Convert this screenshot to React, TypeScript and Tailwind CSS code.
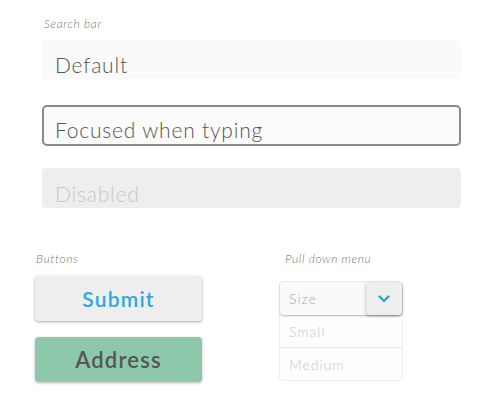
import React from 'react';

const font = { fontFamily: 'Lato, "Noto Sans", sans-serif' };

const Label = ({ children }: { children: React.ReactNode }) => (
  <p className="text-[12px] italic font-light text-[#777] tracking-[0.6px] leading-none">{children}</p>
);

const App = () => {
  return (
    <div className="w-[500px] h-[404px] bg-white relative" style={font}>
      {/* Search bar */}
      <div className="pt-[18px] pl-[42px] pr-[39px]">
        <div className="pl-[2px]">
          <Label>Search bar</Label>
        </div>
        <div className="mt-[10px] h-[39px] rounded-[4px] bg-[#fafafa] flex items-start pt-[14px] px-[13px] text-[21px] leading-none font-light text-[#555] tracking-[0.8px]">
          Default
        </div>
        <div className="mt-[26px] h-[41px] rounded-[5px] border-2 border-[#8a8a8a] bg-[#fbfbfb] flex items-start pt-[12px] px-[11px] text-[21px] leading-none font-light text-[#555] tracking-[0.8px]">
          Focused when typing
        </div>
        <div className="mt-[22px] h-[40px] rounded-[4px] bg-[#eeeeee] flex items-start pt-[15px] px-[13px] text-[21px] leading-none font-light text-[#c8c8c8] tracking-[0.8px]">
          Disabled
        </div>
      </div>

      <div className="flex mt-[45px]">
        {/* Buttons */}
        <div className="pl-[35px] w-[250px]">
          <div className="pl-[1px]">
            <Label>Buttons</Label>
          </div>
          <div className="mt-[11px] w-[167px] h-[45px] rounded-[4px] bg-[#eeeeee] shadow-[0_1px_3px_rgba(0,0,0,0.35)] flex items-center justify-center text-[21px] font-semibold text-[#29aae1] tracking-[1.2px]">
            Submit
          </div>
          <div className="mt-[16px] w-[167px] h-[45px] rounded-[4px] bg-[#8cc8a9] shadow-[0_1px_3px_rgba(0,0,0,0.3)] flex items-center justify-center text-[22px] font-semibold text-[#555] tracking-[1.2px]">
            Address
          </div>
        </div>

        {/* Pull down menu */}
        <div className="pl-[29px]">
          <div className="pl-[6px]">
            <Label>Pull down menu</Label>
          </div>
          <div className="mt-[16px] w-[124px] rounded-[4px] border border-[#efefef] bg-[#fdfdfd]">
            <div className="flex h-[33px] rounded-[4px] shadow-[0_1px_2px_rgba(0,0,0,0.3)] bg-[#fafafa]">
              <div className="flex-1 flex items-center px-[9px] text-[14px] font-light text-[#aaa] tracking-[1px]">Size</div>
              <div className="w-[36px] flex items-center justify-center bg-[#eeeeee] rounded-[4px] shadow-[0_1px_3px_rgba(0,0,0,0.35)]">
                <svg width="12" height="8" viewBox="0 0 12 8">
                  <path d="M1.5 1.5 L6 6 L10.5 1.5" fill="none" stroke="#27a9c9" strokeWidth="2.4" strokeLinecap="round" strokeLinejoin="round" />
                </svg>
              </div>
            </div>
            <div className="h-[33px] flex items-center px-[9px] text-[14px] font-light text-[#c8c8c8] tracking-[1px] border-b border-[#e4e4e4]">Small</div>
            <div className="h-[32px] flex items-center px-[9px] text-[14px] font-light text-[#c8c8c8] tracking-[1px]">Medium</div>
          </div>
        </div>
      </div>
    </div>
  );
};

export default App;
